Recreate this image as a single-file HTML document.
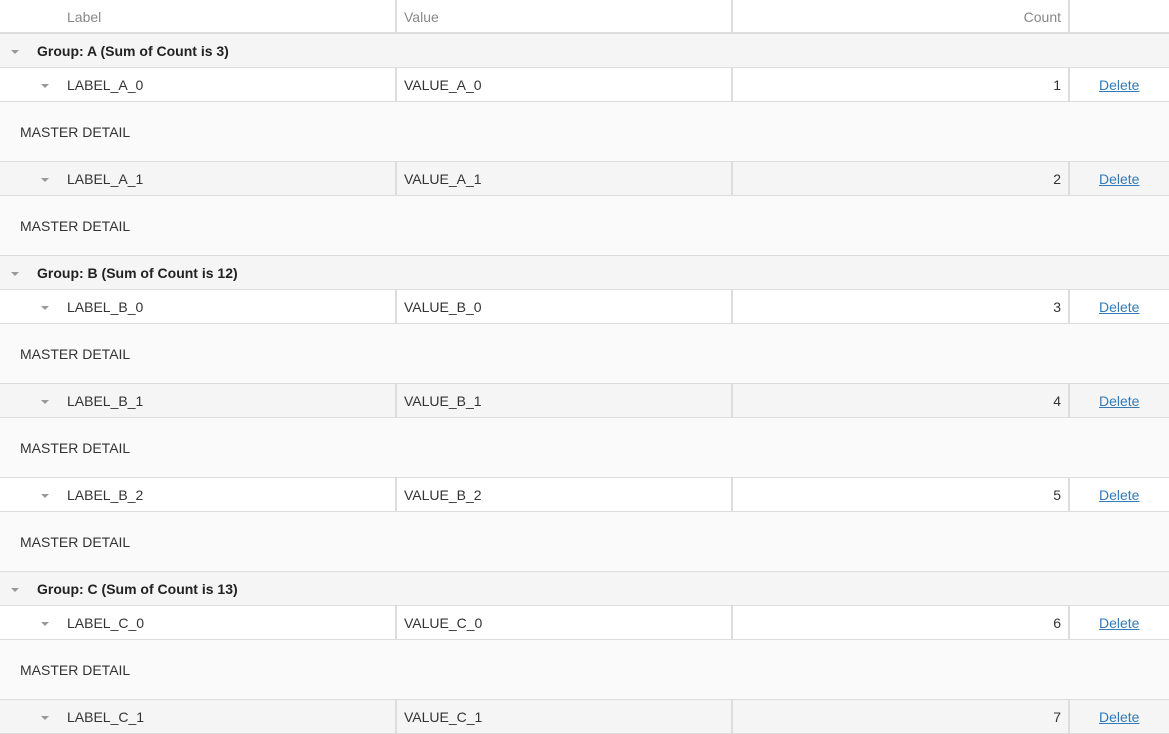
<!DOCTYPE html>
<html><head><style>
*{margin:0;padding:0;box-sizing:border-box}
body{width:1169px;height:723px;overflow:hidden;background:#fff;font-family:"Liberation Sans",sans-serif;font-size:14px;color:#333;position:relative}
.r{position:absolute;left:0;width:1169px;border-bottom:1px solid #ddd}
.h{top:0;height:34px;border-bottom:2px solid #ddd;color:#888}
.g{height:34px;background:#f5f5f5;font-weight:bold;color:#222}
.d{height:34px;background:#fff}
.d.alt{background:#f5f5f5}
.m{height:60px;background:#fafafa}
.c{position:absolute;top:1px;height:33px;line-height:33px;white-space:nowrap}
.sep{position:absolute;top:0;width:2px;height:33px;background:#ddd}
.tri{position:absolute;top:16px;width:0;height:0;border-left:4px solid transparent;border-right:4px solid transparent;border-top:4px solid #999}
a{color:#337ab7;text-decoration:underline}
</style></head><body>
<div class="r h"><div class="c" style="left:67px">Label</div><div class="sep" style="left:395px"></div><div class="c" style="left:404px">Value</div><div class="sep" style="left:731px"></div><div class="c" style="right:108px">Count</div><div class="sep" style="left:1068px"></div></div>

<div class="r g" style="top:34px"><div class="tri" style="left:11px"></div><div class="c" style="left:37px">Group: A (Sum of Count is 3)</div></div>
<div class="r d" style="top:68px"><div class="tri" style="left:41px"></div><div class="c" style="left:67px">LABEL_A_0</div><div class="sep" style="left:395px"></div><div class="c" style="left:404px">VALUE_A_0</div><div class="sep" style="left:731px"></div><div class="c" style="right:108px">1</div><div class="sep" style="left:1068px"></div><div class="c" style="left:1099px"><a>Delete</a></div></div>
<div class="r m" style="top:102px"><div class="c" style="left:20px;top:14px">MASTER DETAIL</div></div>
<div class="r d alt" style="top:162px"><div class="tri" style="left:41px"></div><div class="c" style="left:67px">LABEL_A_1</div><div class="sep" style="left:395px"></div><div class="c" style="left:404px">VALUE_A_1</div><div class="sep" style="left:731px"></div><div class="c" style="right:108px">2</div><div class="sep" style="left:1068px"></div><div class="c" style="left:1099px"><a>Delete</a></div></div>
<div class="r m" style="top:196px"><div class="c" style="left:20px;top:14px">MASTER DETAIL</div></div>

<div class="r g" style="top:256px"><div class="tri" style="left:11px"></div><div class="c" style="left:37px">Group: B (Sum of Count is 12)</div></div>
<div class="r d" style="top:290px"><div class="tri" style="left:41px"></div><div class="c" style="left:67px">LABEL_B_0</div><div class="sep" style="left:395px"></div><div class="c" style="left:404px">VALUE_B_0</div><div class="sep" style="left:731px"></div><div class="c" style="right:108px">3</div><div class="sep" style="left:1068px"></div><div class="c" style="left:1099px"><a>Delete</a></div></div>
<div class="r m" style="top:324px"><div class="c" style="left:20px;top:14px">MASTER DETAIL</div></div>
<div class="r d alt" style="top:384px"><div class="tri" style="left:41px"></div><div class="c" style="left:67px">LABEL_B_1</div><div class="sep" style="left:395px"></div><div class="c" style="left:404px">VALUE_B_1</div><div class="sep" style="left:731px"></div><div class="c" style="right:108px">4</div><div class="sep" style="left:1068px"></div><div class="c" style="left:1099px"><a>Delete</a></div></div>
<div class="r m" style="top:418px"><div class="c" style="left:20px;top:14px">MASTER DETAIL</div></div>
<div class="r d" style="top:478px"><div class="tri" style="left:41px"></div><div class="c" style="left:67px">LABEL_B_2</div><div class="sep" style="left:395px"></div><div class="c" style="left:404px">VALUE_B_2</div><div class="sep" style="left:731px"></div><div class="c" style="right:108px">5</div><div class="sep" style="left:1068px"></div><div class="c" style="left:1099px"><a>Delete</a></div></div>
<div class="r m" style="top:512px"><div class="c" style="left:20px;top:14px">MASTER DETAIL</div></div>

<div class="r g" style="top:572px"><div class="tri" style="left:11px"></div><div class="c" style="left:37px">Group: C (Sum of Count is 13)</div></div>
<div class="r d" style="top:606px"><div class="tri" style="left:41px"></div><div class="c" style="left:67px">LABEL_C_0</div><div class="sep" style="left:395px"></div><div class="c" style="left:404px">VALUE_C_0</div><div class="sep" style="left:731px"></div><div class="c" style="right:108px">6</div><div class="sep" style="left:1068px"></div><div class="c" style="left:1099px"><a>Delete</a></div></div>
<div class="r m" style="top:640px"><div class="c" style="left:20px;top:14px">MASTER DETAIL</div></div>
<div class="r d alt" style="top:700px"><div class="tri" style="left:41px"></div><div class="c" style="left:67px">LABEL_C_1</div><div class="sep" style="left:395px"></div><div class="c" style="left:404px">VALUE_C_1</div><div class="sep" style="left:731px"></div><div class="c" style="right:108px">7</div><div class="sep" style="left:1068px"></div><div class="c" style="left:1099px"><a>Delete</a></div></div>
</body></html>
